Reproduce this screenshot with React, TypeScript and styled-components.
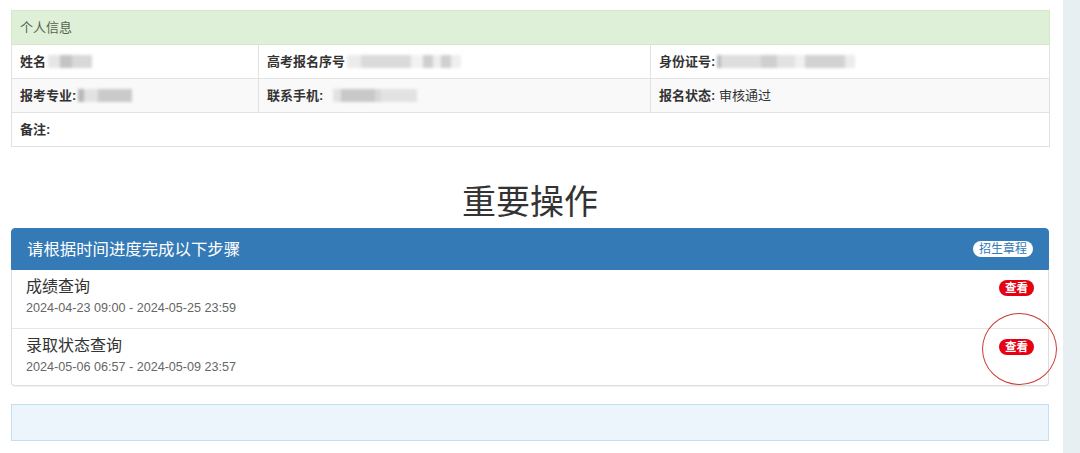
import React from "react";
import styled, { createGlobalStyle } from "styled-components";

const GlobalStyle = createGlobalStyle`
  html, body { margin: 0; padding: 0; background: #fff; }
  body {
    font-family: "Liberation Sans", "Noto Sans CJK SC", sans-serif;
    color: #333;
  }
`;

const Page = styled.div`
  display: flex;
  width: 1080px;
  min-height: 453px;
  overflow: hidden;
`;

const Main = styled.div`
  flex: none;
  width: 1038px;
  margin-left: 11px;
  padding-top: 10px;
  box-sizing: border-box;
`;

const Rail = styled.div`
  flex: none;
  width: 17px;
  margin-left: auto;
  background: #e8eff2;
`;

const InfoTable = styled.table`
  width: 100%;
  border-collapse: collapse;
  table-layout: fixed;
  font-size: 13px;
  line-height: 16px;
`;

const HeadCell = styled.th`
  height: 34px;
  box-sizing: border-box;
  background: #dff0d8;
  color: #56634f;
  font-weight: 400;
  text-align: left;
  padding: 0 8px;
  border: 1px solid #d6e9c6;
`;

const Row = styled.tr<{ $striped?: boolean }>`
  background: ${(p) => (p.$striped ? "#f9f9f9" : "#fff")};
`;

const Cell = styled.td`
  height: 34px;
  box-sizing: border-box;
  padding: 0 8px;
  border: 1px solid #e2e2e2;
  white-space: nowrap;
  overflow: hidden;
`;

const Label = styled.span`
  font-weight: 700;
  color: #333;
`;

const Value = styled.span`
  color: #333;
`;

const Redact = styled.span<{ $gap?: number }>`
  display: inline-flex;
  vertical-align: middle;
  margin-left: ${(p) => p.$gap ?? 2}px;
  filter: blur(1.6px);
  height: 13px;
  position: relative;
  top: -1px;
`;

const Seg = styled.span<{ $w: number; $tone: string }>`
  display: block;
  width: ${(p) => p.$w}px;
  height: 13px;
  background: ${(p) => p.$tone};
`;

const Title = styled.h1`
  margin: 29px 0 0;
  height: 52px;
  line-height: 52px;
  font-size: 34px;
  font-weight: 400;
  text-align: center;
  color: #333;
`;

const Panel = styled.section`
  border-radius: 4px;
  box-shadow: 0 1px 1px rgba(0, 0, 0, 0.05);
`;

const PanelHeading = styled.header`
  display: flex;
  align-items: center;
  justify-content: space-between;
  height: 42px;
  padding: 0 15px;
  background: #337ab7;
  border: 1px solid #337ab7;
  border-radius: 4px 4px 0 0;
  box-sizing: border-box;
  color: #fff;
  font-size: 16.4px;
`;

const HeadingText = styled.span`
  position: relative;
  top: -1px;
`;

const Badge = styled.span<{ $variant: "light" | "red" }>`
  display: inline-block;
  padding: 1px 6px;
  border-radius: 10px;
  font-size: ${(p) => (p.$variant === "red" ? "11.5px" : "12px")};
  line-height: 14px;
  font-weight: ${(p) => (p.$variant === "red" ? 700 : 400)};
  background: ${(p) => (p.$variant === "red" ? "#e50012" : "#fff")};
  color: ${(p) => (p.$variant === "red" ? "#fff" : "#337ab7")};
  white-space: nowrap;
`;

const List = styled.ul`
  list-style: none;
  margin: 0;
  padding: 0;
  border: 1px solid #ddd;
  border-top: none;
  border-radius: 0 0 4px 4px;
`;

const Item = styled.li`
  position: relative;
  display: flex;
  justify-content: space-between;
  align-items: flex-start;
  height: 58px;
  box-sizing: border-box;
  padding: 7px 14px 0;
  & + & {
    height: 57px;
    border-top: 1px solid #e6e6e6;
  }
`;

const ItemText = styled.div`
  display: flex;
  flex-direction: column;
`;

const ItemTitle = styled.div`
  font-size: 16px;
  line-height: 20px;
  color: #333;
`;

const ItemTime = styled.div`
  margin-top: 2px;
  font-size: 12.6px;
  line-height: 18px;
  color: #666;
`;

const ItemBadge = styled(Badge)`
  margin-top: 3px;
`;

const Mark = styled.span`
  position: absolute;
  right: -9px;
  top: -16px;
  width: 75px;
  height: 72px;
  border: 1.6px solid #cc3a2e;
  border-radius: 50%;
  box-sizing: border-box;
  pointer-events: none;
`;

const Notice = styled.div`
  margin-top: 18px;
  height: 37px;
  background: #edf5fc;
  border: 1px solid #c6dff0;
  box-sizing: border-box;
`;

type SegDef = [number, string];

const Blur = ({ segs, gap }: { segs: SegDef[]; gap?: number }) => (
  <Redact $gap={gap}>
    {segs.map(([w, t], i) => (
      <Seg key={i} $w={w} $tone={t} />
    ))}
  </Redact>
);

const steps = [
  { title: "成绩查询", time: "2024-04-23 09:00 - 2024-05-25 23:59", marked: false },
  { title: "录取状态查询", time: "2024-05-06 06:57 - 2024-05-09 23:57", marked: true },
];

export default function App() {
  return (
    <>
      <GlobalStyle />
      <Page>
        <Main>
          <InfoTable>
            <colgroup>
              <col style={{ width: 247 }} />
              <col style={{ width: 392 }} />
              <col style={{ width: 399 }} />
            </colgroup>
            <thead>
              <tr>
                <HeadCell colSpan={3}>个人信息</HeadCell>
              </tr>
            </thead>
            <tbody>
              <Row>
                <Cell>
                  <Label>姓名</Label>
                  <Blur segs={[[12, "#e6e6e6"], [12, "#c4c4c4"], [20, "#d8d8d8"]]} />
                </Cell>
                <Cell>
                  <Label>高考报名序号</Label>
                  <Blur
                    segs={[
                      [14, "#ececec"],
                      [50, "#dadada"],
                      [12, "#f2f2f2"],
                      [10, "#cfcfcf"],
                      [8, "#eeeeee"],
                      [10, "#d0d0d0"],
                      [10, "#efefef"],
                    ]}
                  />
                </Cell>
                <Cell>
                  <Label>身份证号:</Label>
                  <Blur
                    segs={[
                      [4, "#bdbdbd"],
                      [40, "#dedede"],
                      [16, "#cfcfcf"],
                      [18, "#e2e2e2"],
                      [10, "#f0f0f0"],
                      [40, "#d2d2d2"],
                      [10, "#ececec"],
                    ]}
                  />
                </Cell>
              </Row>
              <Row $striped>
                <Cell>
                  <Label>报考专业:</Label>
                  <Blur segs={[[6, "#b8b8b8"], [14, "#e2e2e2"], [34, "#cacaca"]]} />
                </Cell>
                <Cell>
                  <Label>联系手机:</Label>
                  <Blur
                    gap={10}
                    segs={[
                      [8, "#e2e2e2"],
                      [34, "#c8c8c8"],
                      [6, "#d8d8d8"],
                      [36, "#e2e2e2"],
                    ]}
                  />
                </Cell>
                <Cell>
                  <Label>报名状态:</Label> <Value>审核通过</Value>
                </Cell>
              </Row>
              <Row>
                <Cell colSpan={3}>
                  <Label>备注:</Label>
                </Cell>
              </Row>
            </tbody>
          </InfoTable>

          <Title>重要操作</Title>

          <Panel>
            <PanelHeading>
              <HeadingText>请根据时间进度完成以下步骤</HeadingText>
              <Badge $variant="light">招生章程</Badge>
            </PanelHeading>
            <List>
              {steps.map((s) => (
                <Item key={s.title}>
                  <ItemText>
                    <ItemTitle>{s.title}</ItemTitle>
                    <ItemTime>{s.time}</ItemTime>
                  </ItemText>
                  <ItemBadge $variant="red">查看</ItemBadge>
                  {s.marked && <Mark />}
                </Item>
              ))}
            </List>
          </Panel>

          <Notice />
        </Main>
        <Rail />
      </Page>
    </>
  );
}
